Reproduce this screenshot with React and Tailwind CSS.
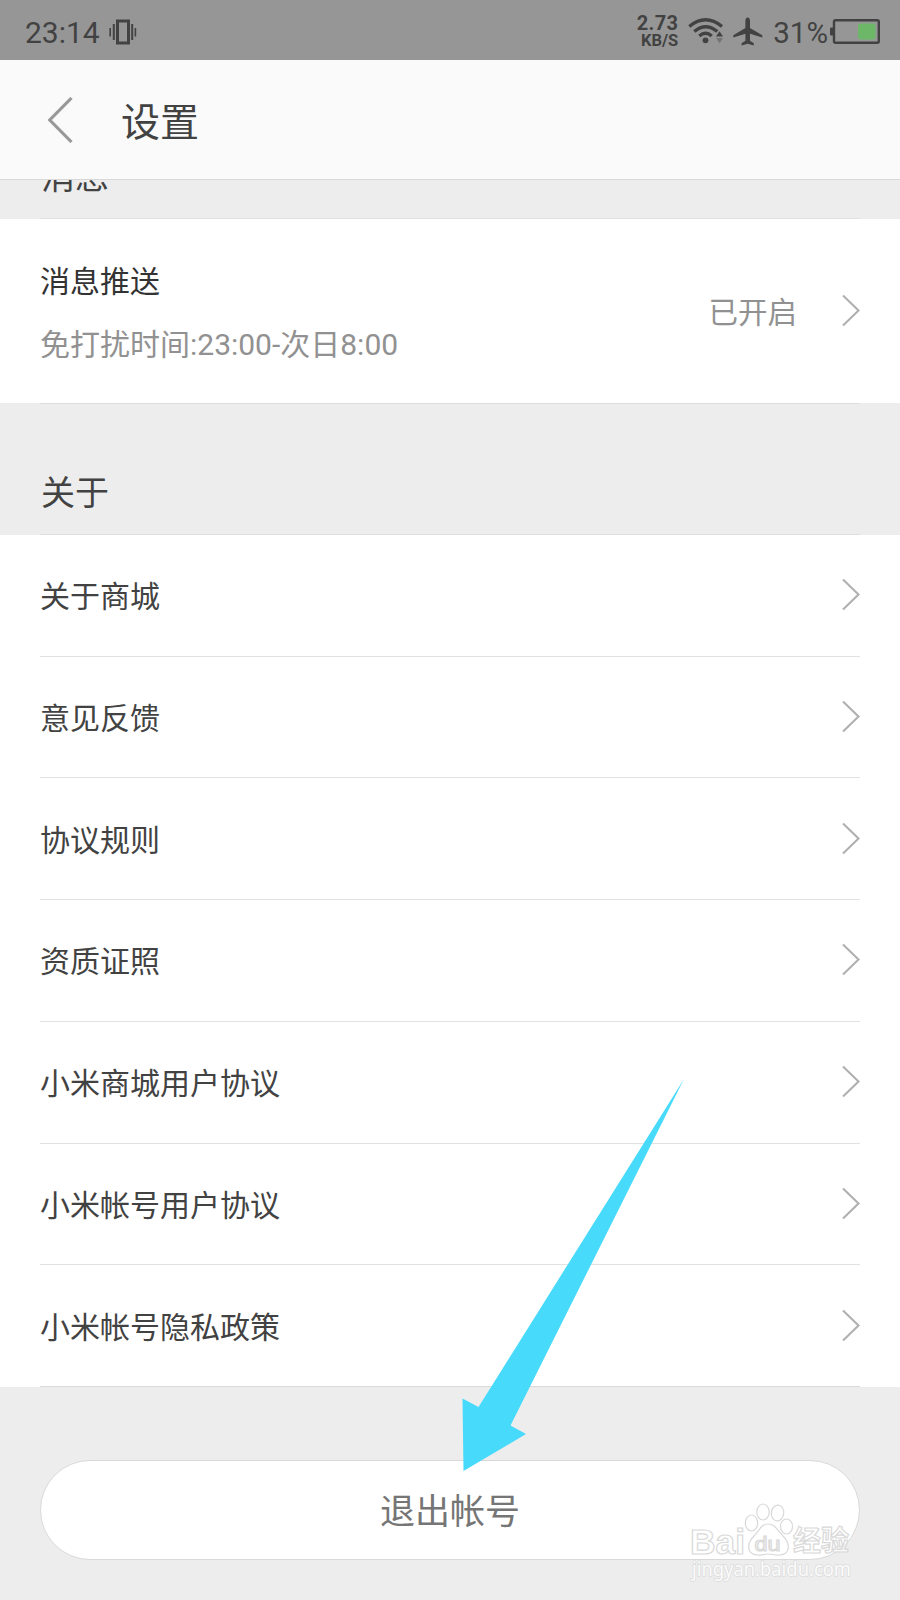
const aboutItems = [
  "关于商城",
  "意见反馈",
  "协议规则",
  "资质证照",
  "小米商城用户协议",
  "小米帐号用户协议",
  "小米帐号隐私政策"
];

function Chevron() {
  return (
    <svg className="w-[18px] h-8 shrink-0" viewBox="0 0 18 32" fill="none" stroke="#b0b0b0" strokeWidth="2.1">
      <path d="M1 0.5 L16.5 15.5 L1 30.5" />
    </svg>
  );
}

function StatusBar() {
  return (
    <div className="h-[60px] bg-[#969696] text-[#424242] flex items-center justify-between pl-[25px] pr-5">
      <div className="flex items-center">
        <span className="text-[30px] leading-[34px] pt-[5px]">23:14</span>
        {/* vibrate */}
        <svg className="w-7 h-[26px] ml-[9px] mt-[3px]" viewBox="0 0 28 26" fill="none" stroke="#424242">
          <rect x="8.5" y="2" width="11" height="22" strokeWidth="3" />
          <path d="M4.8 5 V21 M23.2 5 V21" strokeWidth="2" />
          <path d="M1.2 9 V17.5 M26.4 9 V17.5" strokeWidth="1.6" />
        </svg>
      </div>

      <div className="flex items-center">
        <div className="flex flex-col items-end font-bold pt-[3px]">
          <span className="text-[20px] leading-[18px] tracking-[0.3px]">2.73</span>
          <span className="text-[16.5px] leading-[17px]">KB/S</span>
        </div>
        {/* wifi with traffic marks */}
        <svg className="w-9 h-[26px] ml-[10px] mt-[2px]" viewBox="0 0 36 26" fill="none" stroke="#424242" strokeWidth="3.4">
          <path d="M1.3 8.5 Q17.5 -4.8 34 8.5" />
          <path d="M6.3 13.5 Q17.5 4 29.3 13.5" />
          <path d="M11.3 18 Q17.5 12.6 23.7 18" />
          <circle cx="17.5" cy="22.3" r="2.9" fill="#424242" stroke="none" />
          <path d="M28 18.5 L31.5 13.3 L35 18.5 Z" fill="#424242" stroke="none" />
          <path d="M28 20 L31.5 25.2 L35 20 Z" fill="#747474" stroke="none" />
        </svg>
        {/* airplane */}
        <svg className="w-[30px] h-[29px] ml-[9px] mt-[2px]" viewBox="0 0 30 29" fill="#424242">
          <path d="M14.7 0.5 C16.2 0.5 17 2 17 3.8 V11 L29.3 18.2 V20.6 L17 16.7 V23.8 L20.8 26.3 V28.4 L14.7 26.7 L8.6 28.4 V26.3 L12.4 23.8 V16.7 L0.3 20.6 V18.2 L12.4 11 V3.8 C12.4 2 13.2 0.5 14.7 0.5 Z" />
        </svg>
        <span className="text-[29.5px] leading-[34px] pt-[5px] ml-[10px]">31%</span>
        {/* battery */}
        <svg className="w-[50px] h-[25px] ml-[2px] mt-[2px]" viewBox="0 0 50 25">
          <rect x="0" y="8.5" width="3.5" height="8" rx="1" fill="#424242" />
          <rect x="4" y="1.2" width="44.8" height="22.6" rx="1.5" fill="none" stroke="#424242" strokeWidth="2.4" />
          <rect x="28" y="4.5" width="17.5" height="16" rx="3" fill="#6cb868" />
        </svg>
      </div>
    </div>
  );
}

function TitleBar() {
  return (
    <div className="h-[120px] bg-[#fafafa] border-b border-[#d9d9d9] flex items-center pl-12">
      <svg className="w-[25px] h-[46px]" viewBox="0 0 25 46" fill="none" stroke="#999999" strokeWidth="3.2">
        <path d="M23.5 1 L1.8 23 L23.5 45" />
      </svg>
      <h1 className="text-[39px] leading-[50px] ml-12 pt-[6px] text-[#424242]">设置</h1>
    </div>
  );
}

function Watermark() {
  return (
    <svg className="absolute left-[685px] top-[1498px] w-[180px] h-[100px]" viewBox="0 0 180 100">
      <g fill="#ffffff" fillOpacity="0.65" stroke="#d9d9d9" strokeWidth="1.2">
        <ellipse cx="66.5" cy="25" rx="6.2" ry="8" />
        <ellipse cx="78" cy="14" rx="6.2" ry="8" />
        <ellipse cx="92.5" cy="15" rx="6.2" ry="8" transform="rotate(8 92.5 15)" />
        <ellipse cx="101.5" cy="28.5" rx="6" ry="7.5" />
        <path d="M83 26 C90 26 92 32 98 38 C106 46 105 56 95 57 C90 57.5 87 56 83 56 C79 56 76 57.5 72 57 C62 56 61 46 69 38 C75 32 76 26 83 26 Z" />
        <text x="5" y="55.5" fontSize="35" fontWeight="700" fontFamily="Liberation Sans, sans-serif" textLength="55" lengthAdjust="spacingAndGlyphs">Bai</text>
        <text x="69.5" y="52.5" fontSize="20" fontFamily="Liberation Sans, sans-serif" textLength="26" lengthAdjust="spacingAndGlyphs">du</text>
        <text x="108" y="53" fontSize="28" fontWeight="700" fontFamily="Noto Sans CJK SC, sans-serif" textLength="56" lengthAdjust="spacingAndGlyphs">经验</text>
      </g>
      <text x="7" y="77.5" fontSize="20" fill="#fbfbfb" stroke="#dcdcdc" strokeWidth="1.6" paintOrder="stroke" fontFamily="Noto Sans, sans-serif" textLength="159" lengthAdjust="spacingAndGlyphs">jingyan.baidu.com</text>
    </svg>
  );
}

function App() {
  return (
    <div className="relative w-[900px] h-[1600px] overflow-hidden bg-[#ededed] font-['Roboto','Noto_Sans_CJK_SC',sans-serif]">
      <StatusBar />
      <TitleBar />

      {/* section title scrolled under the title bar */}
      <div className="h-[39px] px-10 overflow-hidden">
        <div className="h-full flex items-end overflow-hidden border-b border-[#e0e0e0]">
          <h2 className="text-[34px] leading-[50px] pl-px pb-[16px] text-[#424242]">消息</h2>
        </div>
      </div>

      <div className="h-[184px] bg-white px-10">
        <div className="h-full flex items-center justify-between">
          <div className="pt-[4px]">
            <p className="text-[30px] leading-[44px] text-[#333333]">消息推送</p>
            <p className="text-[30px] leading-[44px] mt-[19px] text-[#919191]">免打扰时间:23:00-次日8:00</p>
          </div>
          <div className="flex items-center">
            <span className="text-[29.5px] leading-[44px] pt-[4px] mr-[45px] text-[#919191]">已开启</span>
            <Chevron />
          </div>
        </div>
      </div>

      <div className="h-[132px] px-10">
        <div className="h-full flex items-end border-y border-[#dedede]">
          <h2 className="text-[34px] leading-[50px] pl-px pb-[16px] text-[#424242]">关于</h2>
        </div>
      </div>

      <div className="bg-white px-10">
        {aboutItems.map((item) => (
          <div
            key={item}
            className="h-[121.71px] flex items-center justify-between border-b border-[#e2e2e2] last:border-[#d9d9d9]"
          >
            <span className="text-[30px] leading-[44px] pt-[4px] text-[#424242]">{item}</span>
            <Chevron />
          </div>
        ))}
      </div>

      <div className="px-10 pt-[73px]">
        <button className="w-full h-[100px] rounded-full bg-white border border-[#d9d9d9] text-[35px] leading-[50px] pt-[6px] text-[#757575]">
          退出帐号
        </button>
      </div>

      {/* pointer to the logout button */}
      <svg className="absolute left-[460px] top-[1078px] w-[226px] h-[396px]" viewBox="0 0 226 396">
        <path d="M224 1 L18.5 329 L2.5 320.5 L3.5 393 L66 356 L50.5 347.5 Z" fill="#47dafb" />
      </svg>

      <Watermark />
    </div>
  );
}

export default App;
